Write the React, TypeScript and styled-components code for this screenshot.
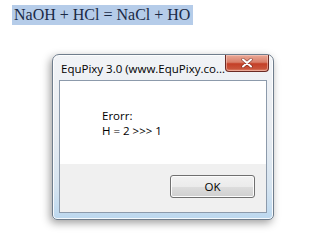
import React, { ReactElement } from "react";
import styled, { createGlobalStyle } from "styled-components";

const GlobalStyle = createGlobalStyle`
  html, body {
    margin: 0;
    padding: 0;
    background: #ffffff;
  }
  body {
    width: 309px;
    height: 237px;
    overflow: hidden;
  }
`;

const Page = styled.div`
  display: flex;
  flex-direction: column;
  padding: 5px 0 0 12px;
`;

const Equation = styled.div`
  align-self: flex-start;
  background: #b5cce9;
  color: #1a2a46;
  font-family: "Liberation Serif", serif;
  font-size: 16px;
  line-height: 20px;
  padding: 0 3px 0 2px;
`;

const Window = styled.div`
  margin: 29px 0 0 40px;
  width: 222px;
  height: 166px;
  box-sizing: border-box;
  display: flex;
  flex-direction: column;
  border: 1px solid #6f7d8c;
  border-radius: 7px 7px 5px 5px;
  background: linear-gradient(
    to bottom,
    #f1f3f6 0%,
    #e8ecf1 45%,
    #d6e4f0 80%,
    #bcd8ef 100%
  );
  box-shadow: inset 0 0 0 1px rgba(255, 255, 255, 0.85),
    -2px 3px 8px rgba(0, 0, 0, 0.38);
`;

const TitleBar = styled.div`
  position: relative;
  height: 25px;
  display: flex;
  align-items: center;
  padding: 0 0 0 8px;
`;

const Title = styled.span`
  font-family: "Open Sans", "Noto Sans", sans-serif;
  font-size: 11.5px;
  color: #000000;
  white-space: nowrap;
  margin-top: 2px;
`;

const CloseButton = styled.div`
  position: absolute;
  top: 0;
  right: 4px;
  width: 44px;
  height: 17px;
  box-sizing: border-box;
  border: 1px solid #6b2a24;
  border-top: none;
  border-radius: 0 0 4px 4px;
  background: linear-gradient(
    to bottom,
    #eaa896 0%,
    #d97f6a 45%,
    #c43f27 55%,
    #c9533a 85%,
    #e28c72 100%
  );
  box-shadow: inset 0 0 0 1px rgba(255, 220, 210, 0.45);
  display: flex;
  align-items: center;
  justify-content: center;
`;

const Client = styled.div`
  flex: 1;
  margin: 0 6px 6px 6px;
  display: flex;
  flex-direction: column;
  border: 1px solid #8c9aab;
  background: #f0f0f0;
`;

const Message = styled.div`
  height: 83px;
  background: #ffffff;
  box-sizing: border-box;
  padding: 27px 0 0 42px;
  font-family: "Open Sans", "Noto Sans", sans-serif;
  font-size: 11.5px;
  line-height: 15px;
  color: #000000;
`;

const ButtonRow = styled.div`
  flex: 1;
  display: flex;
  justify-content: flex-end;
  align-items: flex-start;
  padding: 11px 11px 0 0;
`;

const OkButton = styled.div`
  width: 85px;
  height: 23px;
  box-sizing: border-box;
  border: 1px solid #707070;
  border-radius: 3px;
  background: linear-gradient(to bottom, #f2f2f2 0%, #ebebeb 50%, #dddddd 51%, #cfcfcf 100%);
  box-shadow: inset 0 0 0 1px #fcfcfc;
  display: flex;
  align-items: center;
  justify-content: center;
  font-family: "Open Sans", "Noto Sans", sans-serif;
  font-size: 11.5px;
  color: #000000;
`;

const CloseGlyph = (): ReactElement => (
  <svg width="12" height="10" viewBox="0 0 12 10">
    <path
      d="M2 1.5 L10 8.5 M10 1.5 L2 8.5"
      stroke="#5a1a12"
      strokeWidth="3.4"
      strokeLinecap="round"
      opacity="0.55"
    />
    <path
      d="M2 1.5 L10 8.5 M10 1.5 L2 8.5"
      stroke="#ffffff"
      strokeWidth="2"
      strokeLinecap="round"
    />
  </svg>
);

const App = (): ReactElement => {
  return (
    <>
      <GlobalStyle />
      <Page>
        <Equation>NaOH + HCl = NaCl + HO</Equation>
        <Window>
          <TitleBar>
            <Title>EquPixy 3.0 (www.EquPixy.co...</Title>
            <CloseButton>
              <CloseGlyph />
            </CloseButton>
          </TitleBar>
          <Client>
            <Message>
              <div>Erorr:</div>
              <div>H = 2 &gt;&gt;&gt; 1</div>
            </Message>
            <ButtonRow>
              <OkButton>OK</OkButton>
            </ButtonRow>
          </Client>
        </Window>
      </Page>
    </>
  );
};

export default App;
